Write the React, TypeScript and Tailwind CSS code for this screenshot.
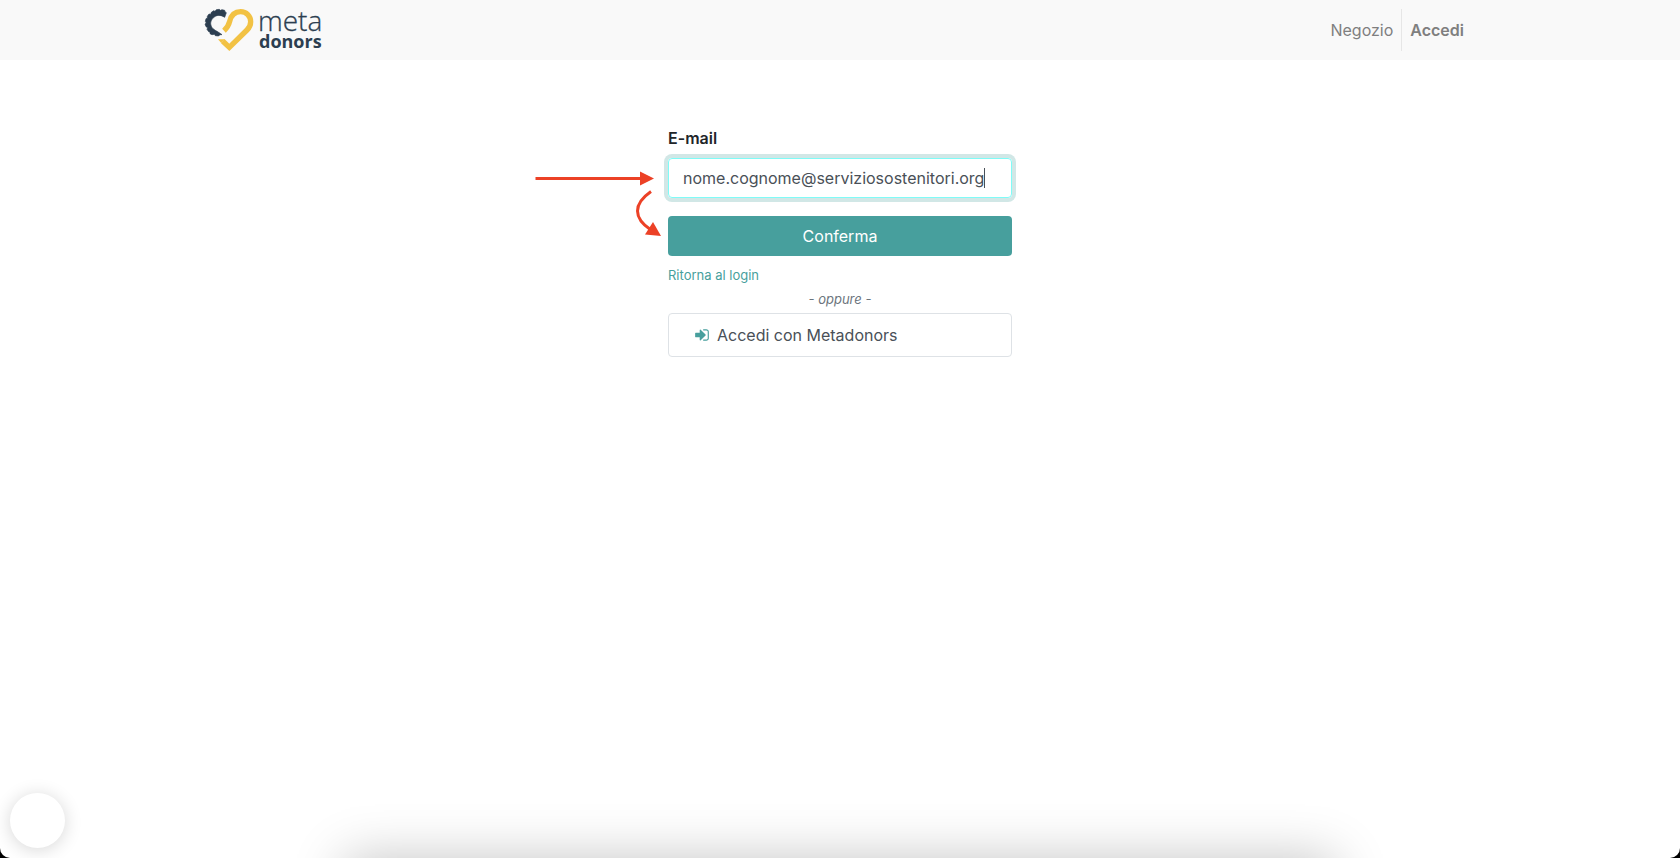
import { useState } from 'react';

function Logo() {
  return (
    <a href="#" aria-label="meta donors" className="flex items-center gap-1">
      <svg viewBox="42 24 150 132" className="h-11 w-[50px]" fill="none" aria-hidden="true">
        <path
          d="M109 38L104 52C95 46 85 44 76 49C64 56 59 68 64 79C68 89 80 92 96 104L90 104L86 108L76 107L73 103L66 104L60 101L60 96L56 95L51 88L53 83L48 80L45 72L49 69L46 64L48 56L52 55L52 49L57 42L62 43L64 37L71 32L75 34L79 29L88 28L91 31L96 29L104 31L105 35Z"
          fill="#2c3e50"
          stroke="#2c3e50"
          strokeWidth="2"
        />
        <path
          d="M102 92 C113 82 116 76 119 64 C124 44 137 35 152 35 C169 35 182 48 182 65 C182 76 178 83 171 90 L118 142 L98 123"
          stroke="#f2c244"
          strokeWidth="16"
          strokeLinejoin="miter"
        />
        <path d="M84 117.500H104L93 128.500Z" fill="#f2c244" />
      </svg>
      <svg
        viewBox="0 0 68 44"
        className="h-11 w-[68px] overflow-visible font-['Open_Sans',sans-serif]"
        fill="#2c3e50"
      >
        <text x="0" y="23" fontSize="28" fontWeight="300" stroke="#2c3e50" strokeWidth="0.3">meta</text>
        <text x="1" y="40" fontSize="18" fontWeight="700">donors</text>
      </svg>
    </a>
  );
}

function SignInIcon() {
  return (
    <svg viewBox="0 0 1536 1792" className="h-4 w-3.5" fill="#479f9d" aria-hidden="true">
      <path d="M1184 896q0 26-19 45l-544 544q-19 19-45 19t-45-19-19-45v-288H64q-26 0-45-19T0 1088V704q0-26 19-45t45-19h448V352q0-26 19-45t45-19 45 19l544 544q19 19 19 45zm352-352v704q0 119-84.5 203.5T1248 1536H928q-13 0-22.5-9.5T896 1504q0-4-1-20t-.5-26.5 3-23.5 10-19.5 20.5-6.5h320q66 0 113-47t47-113V544q0-66-47-113t-113-47H936l-11.5-1-11.5-3-8-5.500-7-9-2-13.500q0-4-1-20t-.5-26.500 3-23.500 10-19.500 20.500-6.500h320q119 0 203.500 84.500T1536 544z" />
    </svg>
  );
}

// Red pointers to the left of the form
function Arrows() {
  return (
    <svg
      viewBox="-12 0 140 70"
      className="pointer-events-none absolute right-full top-11 h-[70px] w-[140px]"
      fill="none"
      aria-hidden="true"
    >
      <path d="M-4.500 8.500H104" stroke="#ec4126" strokeWidth="3" />
      <path d="M100 1.500L114 8.500L100 15.500Z" fill="#ec4126" />
      <path d="M111 21.500C93 34 93 48 111 60" stroke="#ec4126" strokeWidth="3" />
      <path d="M113 52L121 66L105 64.500Z" fill="#ec4126" />
    </svg>
  );
}

export default function App() {
  const [email, setEmail] = useState('nome.cognome@serviziosostenitori.org');

  return (
    <div className="bg-black">
      <div className="relative flex min-h-screen flex-col overflow-hidden rounded-b-[10px] bg-white font-[Inter,sans-serif] text-base text-[#212529]">
        <header className="bg-[#f9f9f9]">
          <div className="mx-auto flex h-[60px] max-w-[1320px] items-center justify-between px-6">
            <Logo />
            <nav className="flex h-[42px] items-stretch pr-1 text-[#7f7f7f]">
              <a href="#" className="flex items-center px-2">Negozio</a>
              <a href="#" className="flex items-center border-l border-[#e6e6e6] px-2 font-semibold">Accedi</a>
            </nav>
          </div>
        </header>

        <main className="flex justify-center px-4 pt-[66px]">
          <form className="relative w-full max-w-[344px]" onSubmit={e => e.preventDefault()}>
            <Arrows />
            <label htmlFor="email" className="mb-2 block font-semibold leading-6">E-mail</label>
            <div className="flex h-10 items-center rounded border border-[#80fbf7] px-3.5 text-[#495057] ring-4 ring-[#d1e7e6]">
              <input
                id="email"
                type="email"
                value={email}
                onChange={e => setEmail(e.target.value)}
                className="max-w-full field-sizing-content outline-none"
              />
              <span className="h-5 w-px bg-[#495057]" />
            </div>
            <button type="submit" className="mt-[18px] h-10 w-full rounded bg-[#479f9d] text-white">
              Conferma
            </button>
            <a href="#" className="mt-[7px] block text-[13px] leading-6 text-[#479f9d]">Ritorna al login</a>
            <em className="block text-center text-[13px] leading-6 text-[#6c757d]">- oppure -</em>
            <a
              href="#"
              className="mt-0.5 flex h-11 items-center gap-2 rounded border border-[#dee2e6] px-[26px] text-[#495057]"
            >
              <SignInIcon />
              Accedi con Metadonors
            </a>
          </form>
        </main>

        <button
          type="button"
          aria-label="Chat"
          className="absolute bottom-2.5 left-2.5 size-[55px] rounded-full bg-white shadow-[0_2px_18px_rgba(0,0,0,0.16)]"
        />
        <div className="absolute inset-x-[345px] top-full h-40 shadow-[0_0_50px_rgba(0,0,0,0.23)]" />
      </div>
    </div>
  );
}
